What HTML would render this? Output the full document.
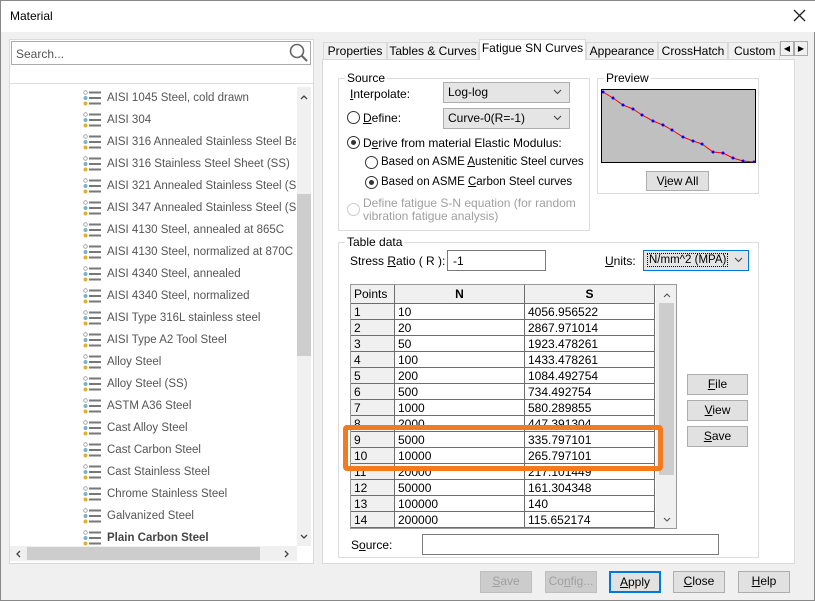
<!DOCTYPE html>
<html><head><meta charset="utf-8"><style>
*{box-sizing:border-box;margin:0;padding:0}
body{width:815px;height:601px;background:#f0f0f0;font-family:"Liberation Sans",sans-serif;font-size:12px;color:#000;position:relative;overflow:hidden;border:1px solid #888}
.a{position:absolute}
.title{left:0;top:0;width:815px;height:31px;background:#fff}
.btn{position:absolute;background:#e1e1e1;border:1px solid #adadad;text-align:center;line-height:19px;font-size:12px}
.dis{color:#a0a0a0;background:#ccc;border-color:#bfbfbf}
.grp{position:absolute;border:1px solid #dcdcdc}
.gl{position:absolute;background:#f0f0f0;padding:0 2px;top:-8px;left:6px}
.item{position:absolute;left:82px;height:22px;line-height:22px;color:#555;font-size:11.5px;overflow:hidden}
.item .ic{position:absolute;left:0;top:3px;width:20px;height:16px}
.item span{position:absolute;left:24px;white-space:nowrap}
table{border-collapse:collapse;font-size:12px}
td{border:1px solid #6d6d6d;height:16px;padding:0 3px;line-height:14px;background:#fff}
td.p{background:#f0f0f0}
.rad{position:absolute;width:13px;height:13px;border:1px solid #333;border-radius:50%;background:#fff}
.rad.on::after{content:"";position:absolute;left:3px;top:3px;width:5px;height:5px;border-radius:50%;background:#333}
.sel{position:absolute;background:#e5e5e5;border:1px solid #adadad;padding-left:4px;line-height:18px}
.chev{position:absolute;right:7px;top:6px}
u{text-decoration:underline}
.tabs div{position:absolute;top:1px;height:18px;border:1px solid #d9d9d9;background:#f0f0f0;text-align:center;line-height:16px;white-space:nowrap;overflow:hidden}
</style></head><body>
<div class="a title"></div>
<div class="a" style="left:9px;top:8px;font-size:12px">Material</div>
<svg class="a" style="left:792px;top:8px" width="13" height="13"><path d="M1 1L12 12M12 1L1 12" stroke="#222" stroke-width="1.3"/></svg>

<!-- left panel -->
<div class="a" style="left:8px;top:38px;width:305px;height:525px;border:1px solid #d9d9d9;background:#fff"></div>
<div class="a" style="left:10px;top:40px;width:300px;height:24px;border:1px solid #aaa;background:#fff;color:#555;padding:5px 4px">Search...</div>
<svg class="a" style="left:288px;top:42px" width="20" height="20"><circle cx="8" cy="8" r="6.5" stroke="#666" stroke-width="1.6" fill="none"/><line x1="12.5" y1="12.5" x2="18" y2="18" stroke="#666" stroke-width="2"/></svg>
<div class="a" style="left:9px;top:82px;width:303px;height:1px;background:#ddd"></div>
<div id="list"></div>
<div class="a" style="left:296px;top:86px;width:14px;height:459px;background:#f0f0f0"></div>
<div class="a" style="left:296px;top:193px;width:14px;height:162px;background:#cdcdcd"></div>
<svg class="a" style="left:299px;top:93px" width="8" height="6"><path d="M1 5L4 2L7 5" stroke="#444" stroke-width="1.3" fill="none"/></svg>
<svg class="a" style="left:299px;top:533px" width="8" height="6"><path d="M1 1L4 4L7 1" stroke="#444" stroke-width="1.3" fill="none"/></svg>
<div class="a" style="left:9px;top:545px;width:287px;height:15px;background:#f0f0f0"></div>
<div class="a" style="left:26px;top:546px;width:233px;height:13px;background:#cdcdcd"></div>
<svg class="a" style="left:14px;top:549px" width="6" height="8"><path d="M5 1L2 4L5 7" stroke="#444" stroke-width="1.3" fill="none"/></svg>
<svg class="a" style="left:283px;top:549px" width="6" height="8"><path d="M1 1L4 4L1 7" stroke="#444" stroke-width="1.3" fill="none"/></svg>

<!-- tabs -->
<div class="a" style="left:321px;top:58px;width:473px;height:505px;border:1px solid #d9d9d9;background:#fff"></div>
<div class="a tabs" style="left:0;top:40px;height:19px;font-size:12px">
<div style="left:322px;width:64px">Properties</div>
<div style="left:386px;width:92px">Tables &amp; Curves</div>
<div style="left:478px;width:107px;top:-2px;height:21px;background:#fff;border-bottom:none">Fatigue SN Curves</div>
<div style="left:585px;width:72px">Appearance</div>
<div style="left:657px;width:70px">CrossHatch</div>
<div style="left:727px;width:52px;text-align:left;padding-left:5px">Custom</div>
</div>
<div class="a" style="left:779px;top:40px;width:14px;height:15px;border:1px solid #aaa;background:#f0f0f0;font-size:8px;text-align:center;line-height:13px">◀</div>
<div class="a" style="left:793px;top:40px;width:14px;height:15px;border:1px solid #aaa;background:#f0f0f0;font-size:8px;text-align:center;line-height:13px">▶</div>

<!-- source group -->
<div class="grp" style="left:337px;top:77px;width:252px;height:153px"><div class="gl" style="background:#fff">Source</div></div>
<div class="a" style="left:349px;top:86px"><u>I</u>nterpolate:</div>
<div class="sel" style="left:442px;top:81px;width:127px;height:21px">Log-log<svg class="chev" width="9" height="6"><path d="M1 1L4.5 4.5L8 1" stroke="#444" stroke-width="1.1" fill="none"/></svg></div>
<div class="rad" style="left:346px;top:110px"></div>
<div class="a" style="left:362px;top:110px"><u>D</u>efine:</div>
<div class="sel" style="left:442px;top:107px;width:127px;height:21px">Curve-0(R=-1)<svg class="chev" width="9" height="6"><path d="M1 1L4.5 4.5L8 1" stroke="#444" stroke-width="1.1" fill="none"/></svg></div>
<div class="rad on" style="left:346px;top:135px"></div>
<div class="a" style="left:362px;top:135px">D<u>e</u>rive from material Elastic Modulus:</div>
<div class="rad" style="left:364px;top:155px"></div>
<div class="a" style="left:380px;top:155px;font-size:11.5px">Based on ASME <u>A</u>ustenitic Steel curves</div>
<div class="rad on" style="left:364px;top:175px"></div>
<div class="a" style="left:380px;top:175px;font-size:11.5px">Based on ASME <u>C</u>arbon Steel curves</div>
<div class="rad" style="left:346px;top:202px;border-color:#ccc"></div>
<div class="a" style="left:362px;top:196px;color:#a0a0a0;line-height:13px">Define fatigue S-N equation (for random<br>vibration fatigue analysis)</div>

<!-- preview -->
<div class="grp" style="left:596px;top:77px;width:162px;height:116px"><div class="gl" style="background:#fff">Preview</div></div>
<svg class="a" style="left:600px;top:88px" width="155" height="74"><rect x="0.5" y="0.5" width="154" height="73" fill="#c0c0c0" stroke="#000"/>
<polyline points="2,3 12,9 22,16 32,20 41,26 52,32 62,36 71,41 82,48 92,52 101,55 112,63 122,64 132,69 142,72 153,73" fill="none" stroke="#f00" stroke-width="1"/>
<g fill="#00f"><circle cx="2" cy="3" r="1.5"/><circle cx="12" cy="9" r="1.5"/><circle cx="22" cy="16" r="1.5"/><circle cx="32" cy="20" r="1.5"/><circle cx="41" cy="26" r="1.5"/><circle cx="52" cy="32" r="1.5"/><circle cx="62" cy="36" r="1.5"/><circle cx="71" cy="41" r="1.5"/><circle cx="82" cy="48" r="1.5"/><circle cx="92" cy="52" r="1.5"/><circle cx="101" cy="55" r="1.5"/><circle cx="112" cy="63" r="1.5"/><circle cx="122" cy="64" r="1.5"/><circle cx="132" cy="69" r="1.5"/><circle cx="142" cy="72" r="1.5"/><circle cx="153" cy="73" r="1.5"/></g></svg>
<div class="btn" style="left:645px;top:170px;width:63px;height:20px">V<u>i</u>ew All</div>

<!-- table data -->
<div class="grp" style="left:337px;top:241px;width:421px;height:316px"><div class="gl" style="background:#fff">Table data</div></div>
<div class="a" style="left:349px;top:253px">Stress <u>R</u>atio ( R ):</div>
<div class="a" style="left:446px;top:249px;width:99px;height:21px;border:1px solid #7a7a7a;background:#fff;padding:3px 5px">-1</div>
<div class="a" style="left:604px;top:253px"><u>U</u>nits:</div>
<div class="sel" style="left:642px;top:249px;width:106px;height:21px;padding-left:3px;border:1px solid #0078d7;font-size:11.5px"><span style="border:1px dotted #000;padding:0 1px">N/mm^2 (MPA)</span><svg class="chev" style="right:5px" width="9" height="6"><path d="M1 1L4.5 4.5L8 1" stroke="#444" stroke-width="1.1" fill="none"/></svg></div>

<div class="a" style="left:349px;top:283px;width:327px;height:245px;border:1px solid #999;overflow:hidden;background:#fff">
<table style="width:305px;margin:-1px 0 0 -1px">
<tr><td class="p" style="width:44px;height:19px">Points</td><td class="p" style="width:130px;text-align:center;font-weight:bold">N</td><td class="p" style="text-align:center;font-weight:bold">S</td></tr>
<tr><td class="p">1</td><td>10</td><td>4056.956522</td></tr>
<tr><td class="p">2</td><td>20</td><td>2867.971014</td></tr>
<tr><td class="p">3</td><td>50</td><td>1923.478261</td></tr>
<tr><td class="p">4</td><td>100</td><td>1433.478261</td></tr>
<tr><td class="p">5</td><td>200</td><td>1084.492754</td></tr>
<tr><td class="p">6</td><td>500</td><td>734.492754</td></tr>
<tr><td class="p">7</td><td>1000</td><td>580.289855</td></tr>
<tr><td class="p">8</td><td>2000</td><td>447.391304</td></tr>
<tr><td class="p">9</td><td>5000</td><td>335.797101</td></tr>
<tr><td class="p">10</td><td>10000</td><td>265.797101</td></tr>
<tr><td class="p">11</td><td>20000</td><td>217.101449</td></tr>
<tr><td class="p">12</td><td>50000</td><td>161.304348</td></tr>
<tr><td class="p">13</td><td>100000</td><td>140</td></tr>
<tr><td class="p">14</td><td>200000</td><td>115.652174</td></tr>
<tr><td class="p">15</td><td>500000</td><td>96</td></tr>
</table>
<div class="a" style="left:305px;top:0;width:21px;height:244px;background:#f0f0f0"></div>
<div class="a" style="left:308px;top:18px;width:15px;height:172px;background:#cdcdcd"></div>
<svg class="a" style="left:312px;top:7px" width="8" height="6"><path d="M1 5L4 2L7 5" stroke="#555" stroke-width="1.1" fill="none"/></svg>
<svg class="a" style="left:312px;top:232px" width="8" height="6"><path d="M1 1L4 4L7 1" stroke="#555" stroke-width="1.1" fill="none"/></svg>
</div>
<div class="a" style="left:342px;top:424px;width:320px;height:46px;border:5px solid #f47a20;border-radius:4px"></div>

<div class="btn" style="left:686px;top:373px;width:61px;height:21px"><u>F</u>ile</div>
<div class="btn" style="left:686px;top:399px;width:61px;height:21px"><u>V</u>iew</div>
<div class="btn" style="left:686px;top:425px;width:61px;height:21px"><u>S</u>ave</div>

<div class="a" style="left:350px;top:537px">S<u>o</u>urce:</div>
<div class="a" style="left:421px;top:533px;width:297px;height:21px;border:1px solid #7a7a7a;background:#fff"></div>

<!-- bottom buttons -->
<div class="btn dis" style="left:479px;top:570px;width:52px;height:22px"><u>S</u>ave</div>
<div class="btn dis" style="left:544px;top:570px;width:52px;height:22px">Co<u>n</u>fig...</div>
<div class="btn" style="left:608px;top:570px;width:52px;height:22px;border:2px solid #0078d7;line-height:18px"><u>A</u>pply</div>
<div class="btn" style="left:672px;top:570px;width:52px;height:22px"><u>C</u>lose</div>
<div class="btn" style="left:737px;top:570px;width:52px;height:22px"><u>H</u>elp</div>

<script>
var names=["AISI 1045 Steel, cold drawn","AISI 304","AISI 316 Annealed Stainless Steel Bar","AISI 316 Stainless Steel Sheet (SS)","AISI 321 Annealed Stainless Steel (SS)","AISI 347 Annealed Stainless Steel (SS)","AISI 4130 Steel, annealed at 865C","AISI 4130 Steel, normalized at 870C","AISI 4340 Steel, annealed","AISI 4340 Steel, normalized","AISI Type 316L stainless steel","AISI Type A2 Tool Steel","Alloy Steel","Alloy Steel (SS)","ASTM A36 Steel","Cast Alloy Steel","Cast Carbon Steel","Cast Stainless Steel","Chrome Stainless Steel","Galvanized Steel","Plain Carbon Steel"];
var h="";var icon='<svg class="ic" width="20" height="16"><circle cx="2.5" cy="2.5" r="1.8" fill="none" stroke="#999" stroke-width=".8"/><circle cx="2.5" cy="8" r="2" fill="#7fb0d0"/><circle cx="2.5" cy="13.5" r="2" fill="#e0b030"/><rect x="6" y="1.5" width="12" height="2" fill="#777"/><rect x="6" y="7" width="12" height="2" fill="#777"/><rect x="6" y="12.5" width="12" height="2" fill="#777"/></svg>';
names.forEach(function(n,i){var t=86+i*22;var bottom=t+22>545?"height:"+(545-t)+"px;":"";h+='<div class="item" style="top:'+t+'px;width:213px;'+bottom+'">'+icon+'<span'+(i==20?' style="font-weight:bold;color:#444"':'')+'>'+n+'</span></div>';});
document.getElementById("list").innerHTML=h;
</script>
</body></html>
